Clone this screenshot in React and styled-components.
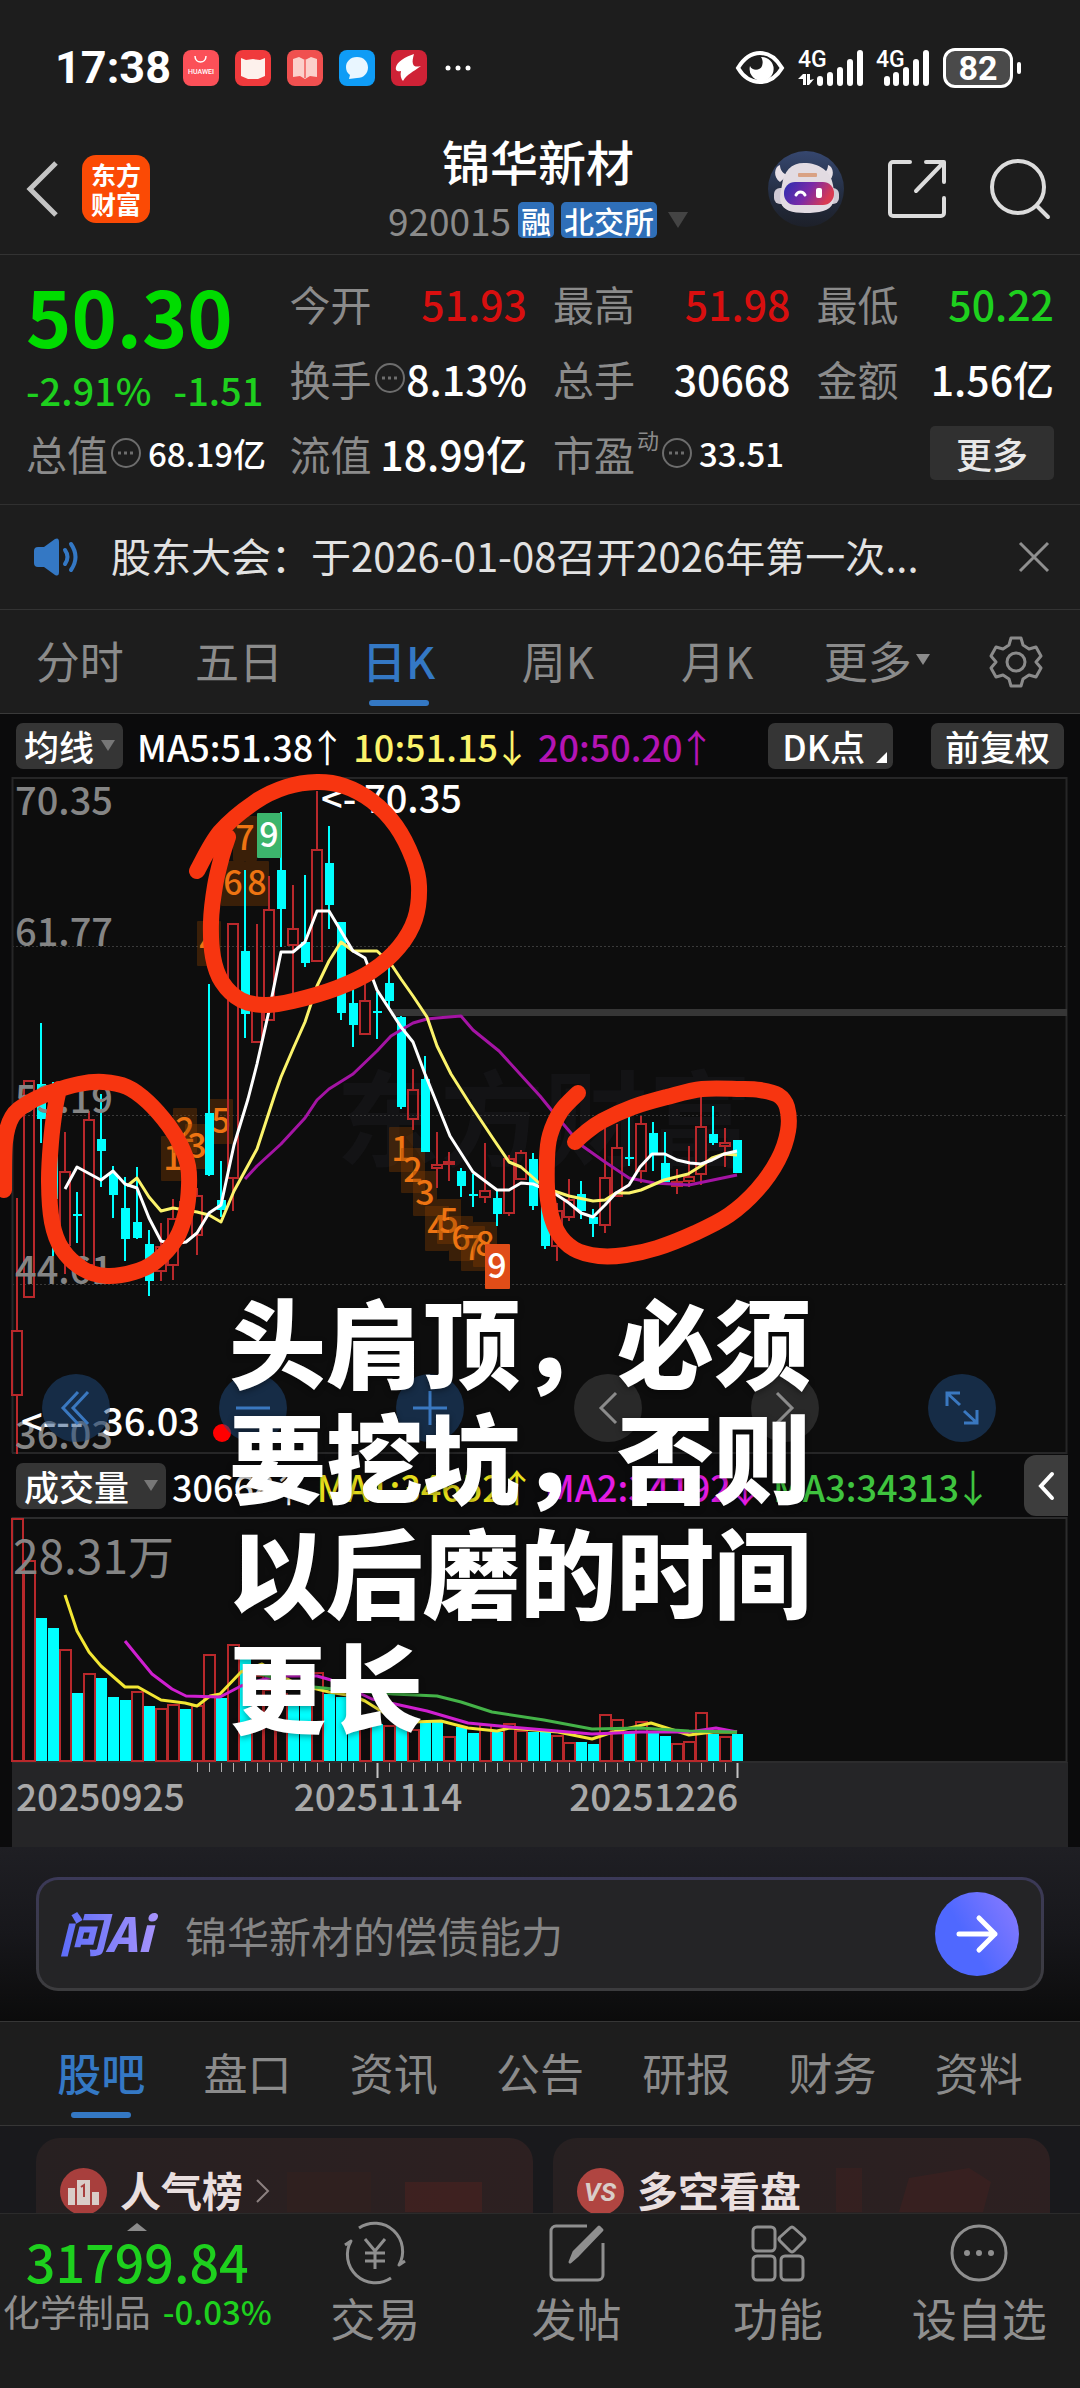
import React, { useState } from 'react';
import styled, { createGlobalStyle } from 'styled-components';

const FONT = '"Noto Sans CJK SC", "Noto Sans", sans-serif';
const CYAN = '#00ffff';
const RED = '#b8282b';
const STEP = 12;
const FIRST_X = 17;

const barX = (i) => FIRST_X + i * STEP;

// [high, body top, body bottom, low, up]
const candles = [
    [1199, 1331, 1397, 1455, 1],
    [1081, 1081, 1299, 1299, 1],
    [1024, 1085, 1120, 1144, 0],
    [1083, 1110, 1200, 1257, 0],
    [1133, 1172, 1247, 1275, 1],
    [1193, 1215, 1217, 1244, 0],
    [1112, 1120, 1267, 1267, 1],
    [1095, 1140, 1152, 1188, 0],
    [1167, 1175, 1196, 1219, 0],
    [1178, 1209, 1240, 1262, 0],
    [1168, 1223, 1239, 1240, 0],
    [1231, 1245, 1282, 1297, 0],
    [1224, 1247, 1273, 1282, 1],
    [1200, 1219, 1267, 1281, 1],
    [1198, 1202, 1215, 1222, 1],
    [1189, 1196, 1237, 1256, 1],
    [985, 1114, 1176, 1177, 0],
    [1162, 1201, 1211, 1218, 0],
    [924, 924, 1180, 1212, 1],
    [871, 952, 1015, 1039, 0],
    [925, 1000, 1044, 1044, 1],
    [877, 910, 1022, 1022, 1],
    [813, 871, 910, 948, 0],
    [886, 929, 947, 995, 1],
    [876, 943, 964, 968, 0],
    [792, 850, 963, 963, 1],
    [827, 864, 906, 930, 0],
    [923, 923, 1014, 1021, 0],
    [990, 1004, 1026, 1048, 0],
    [985, 1001, 1036, 1036, 1],
    [993, 1012, 1014, 1040, 0],
    [968, 984, 1002, 1008, 0],
    [1017, 1018, 1108, 1110, 0],
    [1070, 1090, 1121, 1131, 1],
    [1057, 1080, 1153, 1153, 0],
    [1133, 1165, 1170, 1189, 1],
    [1153, 1162, 1166, 1182, 1],
    [1169, 1172, 1187, 1198, 0],
    [1175, 1195, 1197, 1208, 0],
    [1144, 1191, 1199, 1204, 1],
    [1192, 1199, 1215, 1227, 0],
    [1156, 1159, 1215, 1217, 1],
    [1151, 1153, 1181, 1181, 1],
    [1154, 1160, 1207, 1211, 0],
    [1205, 1205, 1247, 1250, 0],
    [1204, 1211, 1248, 1262, 1],
    [1180, 1200, 1219, 1222, 1],
    [1182, 1195, 1212, 1220, 0],
    [1210, 1218, 1225, 1238, 0],
    [1129, 1178, 1227, 1234, 1],
    [1125, 1148, 1198, 1198, 1],
    [1117, 1158, 1160, 1167, 0],
    [1117, 1124, 1173, 1184, 1],
    [1123, 1134, 1156, 1172, 0],
    [1133, 1164, 1183, 1183, 0],
    [1170, 1182, 1188, 1195, 1],
    [1147, 1177, 1183, 1188, 1],
    [1098, 1127, 1176, 1186, 1],
    [1107, 1135, 1144, 1146, 0],
    [1129, 1143, 1148, 1168, 1],
    [1141, 1141, 1174, 1174, 0],
];

// [top, up]
const volumes = [
    [1519, 1], [1561, 1], [1619, 0], [1629, 0], [1650, 1], [1694, 0], [1674, 1], [1679, 0],
    [1698, 0], [1701, 0], [1692, 1], [1707, 0], [1709, 1], [1705, 1], [1710, 0], [1706, 1],
    [1655, 1], [1699, 0], [1645, 1], [1657, 0], [1676, 1], [1690, 1], [1694, 1], [1700, 0],
    [1702, 0], [1673, 1], [1695, 0], [1698, 0], [1722, 0], [1724, 1], [1725, 0], [1726, 1],
    [1727, 0], [1730, 1], [1723, 0], [1723, 0], [1737, 1], [1728, 0], [1734, 0], [1725, 1],
    [1733, 0], [1724, 1], [1731, 1], [1733, 0], [1733, 0], [1736, 1], [1743, 1], [1743, 0],
    [1745, 0], [1715, 1], [1720, 1], [1734, 0], [1722, 1], [1734, 0], [1737, 0], [1744, 1],
    [1742, 1], [1713, 1], [1735, 0], [1737, 1], [1735, 0],
];

const ma5 = '65,1190 77,1168 101,1181 113,1172 125,1185 137,1189 149,1219 161,1242 173,1245 186,1243 197,1234 209,1214 221,1206 234,1146 248,1100 257,1065 269,1012 281,953 293,953 305,943 317,912 329,912 341,932 353,952 365,959 377,991 401,1028 413,1043 425,1075 450,1137 473,1173 497,1191 509,1191 521,1184 533,1185 545,1190 557,1196 569,1204 581,1214 593,1218 605,1206 616,1194 629,1186 640,1168 652,1155 665,1155 677,1161 690,1164 701,1165 712,1161 724,1155 737,1152';
const ma10 = '127,1187 137,1179 149,1198 161,1212 173,1209 185,1211 197,1213 209,1216 221,1223 234,1192 257,1150 275,1095 281,1078 293,1050 305,1023 317,987 329,962 341,943 353,952 377,952 391,965 401,980 413,997 427,1018 437,1047 451,1075 470,1105 492,1138 509,1163 521,1168 538,1183 554,1192 569,1197 593,1202 605,1201 616,1194 629,1194 641,1191 664,1181 688,1175 701,1167 712,1159 724,1155 737,1156';
const ma20 = '245,1180 257,1167 281,1145 293,1132 305,1119 317,1101 329,1090 353,1075 377,1052 391,1037 401,1031 413,1024 427,1020 437,1019 461,1017 473,1031 499,1052 540,1097 553,1113 570,1133 581,1146 605,1163 629,1179 654,1184 689,1186 737,1176';
const vma1 = '65,1596 77,1632 89,1653 101,1667 125,1688 138,1688 161,1701 185,1704 197,1707 210,1697 220,1695 241,1673 262,1665 296,1685 329,1693 353,1697 365,1702 389,1717 413,1723 441,1722 468,1729 497,1732 510,1729 558,1733 592,1740 613,1733 651,1724 689,1736 713,1733 737,1733';
const vma2 = '125,1642 138,1658 152,1675 172,1690 186,1697 220,1698 241,1687 275,1677 317,1677 331,1681 372,1700 427,1712 468,1724 510,1728 592,1735 640,1733 689,1733 716,1729 737,1733';
const vma3 = '250,1672 303,1687 344,1691 393,1695 437,1697 461,1703 492,1713 544,1721 592,1730 640,1729 689,1732 737,1733';

// [label, box left, box top]
const counts = [
    ['1', 161, 1137], ['2', 173, 1109], ['3', 185, 1125], ['4', 197, 922], ['5', 209, 1100],
    ['6', 221, 862], ['7', 233, 817], ['8', 245, 862],
    ['1', 389, 1128], ['2', 401, 1149], ['3', 413, 1172], ['4', 425, 1207], ['5', 437, 1200],
    ['6', 449, 1217], ['7', 461, 1227], ['8', 473, 1223],
];

const sketches = [
    [[4, 1191], [5, 1143], [12, 1118], [28, 1104], [52, 1093], [79, 1085], [103, 1083], [127, 1088], [148, 1103], [169, 1127], [181, 1147], [188, 1167], [189, 1187], [186, 1213], [176, 1240], [155, 1263], [134, 1273], [107, 1277], [83, 1270], [62, 1250], [52, 1223], [49, 1183], [51, 1143], [55, 1110], [59, 1090]],
    [[197, 872], [220, 833], [255, 803], [286, 788], [317, 783], [344, 787], [372, 802], [396, 827], [413, 860], [419, 887], [415, 920], [399, 948], [372, 972], [337, 989], [293, 1002], [265, 1006], [241, 1001], [222, 983], [213, 958], [211, 923], [215, 887], [222, 857], [228, 838]],
    [[578, 1094], [561, 1112], [550, 1136], [547, 1160], [548, 1201], [557, 1232], [574, 1250], [599, 1257], [626, 1256], [657, 1249], [695, 1234], [729, 1216], [757, 1191], [778, 1161], [788, 1132], [787, 1108], [778, 1096], [760, 1091], [740, 1090], [702, 1090], [667, 1098], [633, 1108], [602, 1122], [585, 1134], [575, 1143]],
];

const smooth = (pts) =>
    pts.slice(0, -1).reduce((d, p, i) => {
        const a = pts[i - 1] || p;
        const b = pts[i + 1];
        const c = pts[i + 2] || b;
        return `${d} C${p[0] + (b[0] - a[0]) / 6} ${p[1] + (b[1] - a[1]) / 6} ${b[0] - (c[0] - p[0]) / 6} ${b[1] - (c[1] - p[1]) / 6} ${b[0]} ${b[1]}`;
    }, `M${pts[0][0]} ${pts[0][1]}`);

const priceLabels = [['70.35', 816], ['61.77', 947], ['53.19', 1114], ['44.61', 1285], ['36.03', 1450]];
const periods = ['分时', '五日', '日K', '周K', '月K', '更多'];
const sections = ['股吧', '盘口', '资讯', '公告', '研报', '财务', '资料'];

const KLineChart = () => (
    <Chart viewBox="0 778 1080 677" role="img" aria-label="日K">
        <rect x="12" y="778" width="1056" height="677" fill="#0d0d0d" />
        <g fontSize="104" fontWeight="700" fill="#131315">
            <text x="336" y="1160">东方财富</text>
        </g>
        <g stroke="#3a3a3a" strokeDasharray="2 2">
            <path d="M12 947.5H1067M12 1116.5H1067M12 1285.5H1067" />
        </g>
        <path d="M12.5 1454V779H1066.5V1454H12" fill="none" stroke="#262627" strokeWidth="2" />
        <rect x="391" y="1010" width="676" height="7" fill="#363636" />
        {counts.map(([label, x, y]) => (
            <g key={`${label}-${x}`}>
                <rect x={x} y={y} width="24" height="45" rx="1" fill="#8a4000" fillOpacity="0.36" />
                <text x={x + 12} y={y + 34} fontSize="34" textAnchor="middle" fill="#ee7412">{label}</text>
            </g>
        ))}
        {candles.map(([hi, top, bottom, lo, up], i) => {
            const x = barX(i);
            return up ? (
                <g key={i} stroke={RED} strokeWidth="2" fill="none">
                    <path d={`M${x} ${hi}V${top}M${x} ${bottom}V${lo}`} />
                    <rect x={x - 5} y={top + 1} width="10" height={Math.max(bottom - top - 2, 1)} />
                </g>
            ) : (
                <g key={i} fill={CYAN}>
                    <rect x={x - 1} y={hi} width="2" height={lo - hi} />
                    <rect x={x - 4} y={top} width="9" height={bottom - top} />
                </g>
            );
        })}
        <g fontSize="38" fill="#858585">
            {priceLabels.map(([label, y]) => (
                <text key={label} x="15" y={y}>{label}</text>
            ))}
        </g>
        <g fill="none" strokeWidth="3" strokeLinejoin="round">
            <polyline points={ma20} stroke="#a414a4" />
            <polyline points={ma10} stroke="#fbf36b" />
            <polyline points={ma5} stroke="#ffffff" />
        </g>
        <rect x="257" y="814" width="24" height="45" rx="1" fill="#3cb56c" />
        <rect x="485" y="1245" width="25" height="45" rx="1" fill="#e04d18" />
        <g fontSize="34" fill="#fff" textAnchor="middle">
            <text x="269" y="848">9</text>
            <text x="497" y="1279">9</text>
        </g>
        <g fontSize="38" fill="#fff">
            <text y="814">
                <tspan x="321">&lt;-</tspan>
                <tspan x="364">70.35</tspan>
            </text>
            <text y="1437">
                <tspan x="21">&lt;---</tspan>
                <tspan x="102">36.03</tspan>
            </text>
        </g>
        <circle cx="222" cy="1434" r="9" fill="#ff0000" />
    </Chart>
);

const VolumeChart = () => (
    <Chart viewBox="0 1518 1080 330" role="img" aria-label="成交量">
        <rect x="12" y="1518" width="1056" height="245" fill="#0d0d0d" />
        <rect x="12" y="1763" width="1056" height="85" fill="#252527" />
        <path d="M12.5 1763V1519H1066.5V1763H12" fill="none" stroke="#2c2c2d" strokeWidth="2" />
        {volumes.map(([top, up], i) =>
            up ? (
                <rect key={i} x={barX(i) - 5} y={top + 1} width="11" height={1761 - top} fill="none" stroke={RED} strokeWidth="2" />
            ) : (
                <rect key={i} x={barX(i) - 5} y={top} width="11" height={1762 - top} fill={CYAN} />
            )
        )}
        <text x="13" y="1575" fontSize="46" fontWeight="400" fill="#858585">28.31万</text>
        <g fill="none" strokeWidth="3" strokeLinejoin="round">
            <polyline points={vma1} stroke="#f2e634" />
            <polyline points={vma2} stroke="#cf1fd0" />
            <polyline points={vma3} stroke="#44b348" />
        </g>
        <g stroke="#b0b0b0" strokeWidth="1">
            {candles.map((c, i) => i > 14 && <path key={i} d={`M${barX(i) + 0.5} 1764V1773`} />)}
        </g>
        <path d="M377.5 1764V1779M737.5 1764V1779" stroke="#c4c4c4" strokeWidth="2" />
        <g fontSize="37" fill="#a9a9a9">
            <text x="16" y="1812">20250925</text>
            <text x="378" y="1812" textAnchor="middle">20251114</text>
            <text x="738" y="1812" textAnchor="end">20251226</text>
        </g>
    </Chart>
);

const Signal = ({ arrows }) => (
    <svg width={arrows ? 65 : 54} height="40" viewBox={arrows ? '0 0 65 40' : '0 0 54 40'} fill="#fff">
        <text x="0" y="19" fontSize="23" fontWeight="500" fontFamily="Roboto, sans-serif">4G</text>
        {arrows && <path d="M0 31l5-5h3v11H5V31zM9 26h3v6l4-1-5 6H9z" />}
        <path
            d={arrows ? 'M22 31v4M32 27v8M42 22v13M52 14v21M62 5v30' : 'M11 31v4M20 27v8M30 22v13M40 14v21M50 5v30'}
            stroke="#fff"
            strokeWidth="6"
            strokeLinecap="round"
        />
    </svg>
);

const Robot = () => (
    <svg width="76" height="76" viewBox="0 0 76 76">
        <defs>
            <linearGradient id="sky" x1="0" y1="0" x2="0" y2="1">
                <stop offset="0" stopColor="#36476f" />
                <stop offset="0.6" stopColor="#232c3f" />
                <stop offset="1" stopColor="#1d2029" />
            </linearGradient>
            <linearGradient id="visor" x1="0" y1="0" x2="1" y2="0.3">
                <stop offset="0" stopColor="#2a2fb0" />
                <stop offset="0.55" stopColor="#7a2aa8" />
                <stop offset="1" stopColor="#d83a52" />
            </linearGradient>
        </defs>
        <circle cx="38" cy="38" r="38" fill="url(#sky)" />
        <path d="M12 14c-6 2-7 12 0 17l8-7c-5-1-8-5-8-10zM60 14c6 2 7 12 0 17l-8-7c5-1 8-5 8-10z" fill="#e6dfe6" />
        <rect x="6" y="37" width="14" height="16" rx="6" fill="#cfc9d4" />
        <rect x="57" y="37" width="14" height="16" rx="6" fill="#cfc9d4" />
        <path d="M36 12c15 0 27 8 29 22 1 6 2 12 0 18-3 8-14 10-28 10-13 0-22-3-24-10-2-6 0-12 1-18 2-14 9-22 22-22z" fill="#e2dbe2" />
        <rect x="30" y="22" width="19" height="4" rx="1" fill="#d9a184" />
        <rect x="16" y="31" width="50" height="23" rx="11" fill="url(#visor)" />
        <path d="M28 44c2-4 7-4 9 0" fill="none" stroke="#fff" strokeWidth="3" strokeLinecap="round" />
        <rect x="48" y="37" width="6" height="10" rx="2" fill="#fff" />
    </svg>
);

const More = () => (
    <svg width="32" height="32" viewBox="0 0 32 32" fill="none" stroke="#6d6d6d" strokeWidth="2">
        <circle cx="16" cy="16" r="14" />
        <path d="M8 16h3M14 16h3M20 16h3" strokeWidth="3" />
    </svg>
);

const Gear = () => (
    <svg width="52" height="52" viewBox="0 0 52 52" fill="none" stroke="#8b8b8b" strokeWidth="3" strokeLinejoin="round">
        <path d="M21 2h10l2 7 6 4 7-2 5 9-5 6 5 6-5 9-7-2-6 4-2 7H21l-2-7-6-4-7 2-5-9 5-6-5-6 5-9 7 2 6-4z" />
        <circle cx="26" cy="26" r="9" />
    </svg>
);

const Stat = ({ label, value, color, hint, sup, small }) => (
    <StatCell>
        <StatLabel>
            {label}
            {sup && <Sup>{sup}</Sup>}
            {hint && <More />}
        </StatLabel>
        <StatValue $color={color} $small={small} $push={!small}>
            {value}
        </StatValue>
    </StatCell>
);

const App = () => {
    const [period, setPeriod] = useState('日K');
    const [section, setSection] = useState('股吧');

    return (
        <Page lang="zh-CN">
            <GlobalStyle />
            <StatusBar>
                <Time>17:38</Time>
                <AppIcons>
                    <svg width="36" height="36" viewBox="0 0 36 36">
                        <rect width="36" height="36" rx="8" fill="#fb5058" />
                        <path d="M12 6c0 8 11 8 11 0" fill="none" stroke="#fff" strokeWidth="1.5" />
                        <text x="18" y="24" fontSize="7" fill="#fff" textAnchor="middle" fontFamily="Roboto, sans-serif">HUAWEI</text>
                    </svg>
                    <svg width="36" height="36" viewBox="0 0 36 36">
                        <rect width="36" height="36" rx="8" fill="#f03a3c" />
                        <path d="M6 8l5 2 7-1 7 1 5-2v18l-7 3h-10l-7-3z" fill="#fdf1ec" />
                    </svg>
                    <svg width="36" height="36" viewBox="0 0 36 36">
                        <rect width="36" height="36" rx="8" fill="#f0504f" />
                        <path d="M6 9l6-2 6 3 6-3 6 2v18l-7-1-5 3-5-3-7 1z" fill="#fbd0cb" />
                        <path d="M18 10v18" stroke="#f37a78" strokeWidth="2" />
                    </svg>
                    <svg width="36" height="36" viewBox="0 0 36 36">
                        <rect width="36" height="36" rx="8" fill="#0f9cf6" />
                        <path d="M18 7c7 0 11 5 11 10.500S25 28 18 28l-8 1 1-4c-3-2-4-5-4-8C7 12 11 7 18 7z" fill="#e9f6ff" />
                    </svg>
                    <svg width="36" height="36" viewBox="0 0 36 36">
                        <rect width="36" height="36" rx="8" fill="#cf2236" />
                        <path d="M23 4c-9 3-17 8-18 13-1 4 2 5 5 4-1 4 0 8 2 10 4-7 10-9 18-15-4 1-7 1-8-2-1-3 0-6 1-10z" fill="#fff" />
                    </svg>
                    <svg width="30" height="36" viewBox="0 0 30 36" fill="#fff">
                        <circle cx="5" cy="18" r="2.5" />
                        <circle cx="15" cy="18" r="2.5" />
                        <circle cx="25" cy="18" r="2.5" />
                    </svg>
                </AppIcons>
                <StatusRight>
                    <svg width="50" height="36" viewBox="0 0 50 36" fill="none">
                        <path d="M3 18C9 8 17 3 25 3s16 5 22 15c-6 10-14 14-22 14S9 28 3 18z" stroke="#fff" strokeWidth="4" />
                        <path d="M26 7a12 12 0 1 1-11 9c2 5 10 5 12 0 1-3 1-6-1-9z" fill="#fff" />
                    </svg>
                    <Signal arrows />
                    <Signal />
                    <Battery>82</Battery>
                </StatusRight>
            </StatusBar>

            <Header>
                <HeaderSide>
                    <IconButton aria-label="返回">
                        <svg width="32" height="56" viewBox="0 0 32 56" fill="none" stroke="#c4c4c4" strokeWidth="5">
                            <path d="M30 2L4 28l26 26" />
                        </svg>
                    </IconButton>
                    <Brand>
                        <span>东方</span>
                        <span>财富</span>
                    </Brand>
                </HeaderSide>
                <TitleBlock>
                    <StockName>锦华新材</StockName>
                    <StockMeta>
                        <span>920015</span>
                        <Badge>融</Badge>
                        <Badge>北交所</Badge>
                        <Caret $size={20} $color="#444" />
                    </StockMeta>
                </TitleBlock>
                <HeaderSide $end>
                    <IconButton aria-label="智能助手">
                        <Robot />
                    </IconButton>
                    <IconButton aria-label="分享">
                        <svg width="58" height="58" viewBox="0 0 58 58" fill="none" stroke="#dcdcdc" strokeWidth="4" strokeLinecap="round" strokeLinejoin="round">
                            <path d="M22 2H5a3 3 0 0 0-3 3v48a3 3 0 0 0 3 3h48a3 3 0 0 0 3-3V38M38 2h18v20M55 3L28 31" />
                        </svg>
                    </IconButton>
                    <IconButton aria-label="搜索">
                        <svg width="60" height="60" viewBox="0 0 60 60" fill="none" stroke="#dcdcdc" strokeWidth="4" strokeLinecap="round">
                            <circle cx="28" cy="28" r="26" />
                            <path d="M47 47l11 11" />
                        </svg>
                    </IconButton>
                </HeaderSide>
            </Header>

            <Quote>
                <PriceColumn>
                    <Price>50.30</Price>
                    <Change>
                        <span>-2.91%</span>
                        <span>-1.51</span>
                    </Change>
                    <Stat label="总值" hint value="68.19亿" small />
                </PriceColumn>
                <StatGrid>
                    <Stat label="今开" value="51.93" color="#d80f0f" />
                    <Stat label="最高" value="51.98" color="#d80f0f" />
                    <Stat label="最低" value="50.22" color="#1ed01e" />
                    <Stat label="换手" hint value="8.13%" />
                    <Stat label="总手" value="30668" />
                    <Stat label="金额" value="1.56亿" />
                    <Stat label="流值" value="18.99亿" />
                    <Stat label="市盈" sup="动" hint value="33.51" small />
                    <StatCell>
                        <MoreButton>更多</MoreButton>
                    </StatCell>
                </StatGrid>
            </Quote>

            <Notice>
                <svg width="46" height="38" viewBox="0 0 46 38" fill="#3478c4">
                    <path d="M0 13q0-4 4-4h6L21 1q4-2 4 3v30q0 5-4 3L10 29H4q-4 0-4-4z" />
                    <path d="M31 12q5 7 0 14M37 6q9 13 0 26" fill="none" stroke="#3478c4" strokeWidth="4" strokeLinecap="round" />
                </svg>
                <NoticeText>股东大会：于2026-01-08召开2026年第一次...</NoticeText>
                <IconButton aria-label="关闭">
                    <svg width="32" height="32" viewBox="0 0 32 32" stroke="#8f8f8f" strokeWidth="3">
                        <path d="M2 2l28 28M30 2L2 30" />
                    </svg>
                </IconButton>
            </Notice>

            <Periods>
                {periods.map((name) => (
                    <Tab key={name} $active={name === period} onClick={() => setPeriod(name)}>
                        {name}
                        {name === '更多' && <Caret $size={14} $color="#8b8b8b" />}
                    </Tab>
                ))}
                <GearButton aria-label="设置">
                    <Gear />
                </GearButton>
            </Periods>

            <ChartArea>
                <Indicators>
                    <Chip>
                        均线
                        <Caret $size={14} $color="#777" />
                    </Chip>
                    <Values>
                        <Legend $color="#fff">MA5:51.38<Arrow>↑</Arrow></Legend>
                        <Legend $color="#fbf36b">10:51.15<Arrow>↓</Arrow></Legend>
                        <Legend $color="#b414b4">20:50.20<Arrow>↑</Arrow></Legend>
                    </Values>
                    <ChipGroup>
                        <CornerChip>
                            DK点
                            <Corner />
                        </CornerChip>
                        <WideChip>前复权</WideChip>
                    </ChipGroup>
                </Indicators>

                <ChartPanel>
                    <KLineChart />
                    <Controls>
                        <RoundButton aria-label="历史">
                            <svg width="34" height="40" viewBox="0 0 34 40">
                                <path d="M19 4L4 20l15 16M29 4L14 20l15 16" />
                            </svg>
                        </RoundButton>
                        <RoundButton aria-label="缩小">
                            <svg width="34" height="34" viewBox="0 0 34 34">
                                <path d="M0 17h34" />
                            </svg>
                        </RoundButton>
                        <RoundButton aria-label="放大">
                            <svg width="34" height="34" viewBox="0 0 34 34">
                                <path d="M0 17h34M17 0v34" />
                            </svg>
                        </RoundButton>
                        <RoundButton $plain aria-label="左移">
                            <svg width="20" height="32" viewBox="0 0 20 32">
                                <path d="M18 1L3 16l15 15" />
                            </svg>
                        </RoundButton>
                        <RoundButton $plain aria-label="右移">
                            <svg width="20" height="32" viewBox="0 0 20 32">
                                <path d="M2 1l15 15L2 31" />
                            </svg>
                        </RoundButton>
                        <RoundButton aria-label="全屏">
                            <svg width="36" height="36" viewBox="0 0 36 36">
                                <path d="M3 16V3h13M3 3l13 12M33 20v13H20M33 33L20 21" />
                            </svg>
                        </RoundButton>
                    </Controls>
                </ChartPanel>

                <VolumeBar>
                    <Chip $gap={11}>
                        成交量
                        <Caret $size={14} $color="#777" />
                    </Chip>
                    <VolumeValues>
                        <Legend $color="#fff">30668<Arrow>↑</Arrow></Legend>
                        <Legend $color="#e8e01c">MA1:34652<Arrow>↑</Arrow></Legend>
                        <Legend $color="#e41ce4">MA2:34192<Arrow>↓</Arrow></Legend>
                        <Legend $color="#3fc43f">MA3:34313<Arrow>↓</Arrow></Legend>
                    </VolumeValues>
                    <SideButton aria-label="展开">
                        <svg width="16" height="28" viewBox="0 0 16 28" fill="none" stroke="#fff" strokeWidth="4" strokeLinecap="round">
                            <path d="M14 2L3 14l11 12" />
                        </svg>
                    </SideButton>
                </VolumeBar>
                <VolumeChart />

                <Sketch viewBox="0 715 1080 1133" fill="none" stroke="#f73510" strokeWidth="16" strokeLinecap="round" strokeLinejoin="round">
                    {sketches.map((pts) => (
                        <path key={pts[0][0]} d={smooth(pts)} />
                    ))}
                </Sketch>
                <Caption>
                    头肩顶，必须
                    <br />
                    要挖坑，否则
                    <br />
                    以后磨的时间
                    <br />
                    更长
                </Caption>
            </ChartArea>

            <AskSection>
                <AskBox>
                    <AskLabel htmlFor="ask">问Ai</AskLabel>
                    <AskInput id="ask" placeholder="锦华新材的偿债能力" />
                    <SendButton aria-label="发送">
                        <svg width="42" height="38" viewBox="0 0 42 38" fill="none" stroke="#fff" strokeWidth="5" strokeLinecap="round" strokeLinejoin="round">
                            <path d="M3 19h36M23 3l16 16-16 16" />
                        </svg>
                    </SendButton>
                </AskBox>
            </AskSection>

            <Sections>
                {sections.map((name) => (
                    <Tab key={name} $active={name === section} onClick={() => setSection(name)}>
                        {name}
                    </Tab>
                ))}
            </Sections>

            <Cards>
                <Card>
                    <svg width="47" height="47" viewBox="0 0 47 47">
                        <circle cx="23.5" cy="23.5" r="23.5" fill="#a83f3d" />
                        <path d="M8 20h7v17H8zM17 12h13v25H17zM32 24h7v13h-7z" fill="#d9cdc8" />
                        <path d="M21 19l3-2v12" fill="none" stroke="#a83f3d" strokeWidth="2" />
                    </svg>
                    <CardTitle>人气榜</CardTitle>
                    <svg width="14" height="24" viewBox="0 0 14 24" fill="none" stroke="#8c8080" strokeWidth="2">
                        <path d="M1 1l11 11L1 23" />
                    </svg>
                    <CardArt viewBox="0 0 210 74">
                        <path d="M0 34h84v40H0z" fill="#33201f" />
                        <path d="M118 44h77v30h-77z" fill="#4a2220" />
                    </CardArt>
                </Card>
                <Card>
                    <svg width="47" height="47" viewBox="0 0 47 47">
                        <circle cx="23.5" cy="23.5" r="23.5" fill="#b04541" />
                        <text x="23" y="33" fontSize="26" fontWeight="700" fontStyle="italic" fill="#d9cdc8" textAnchor="middle" fontFamily="Roboto, sans-serif">VS</text>
                    </svg>
                    <CardTitle>多空看盘</CardTitle>
                    <CardArt viewBox="0 0 210 74">
                        <path d="M32 30h26v44H32z" fill="#3c2020" />
                        <path d="M95 74l10-34 60-10 22 14-8 30z" fill="#3f2120" />
                    </CardArt>
                </Card>
            </Cards>

            <BottomBar>
                <IndexCell>
                    <Caret $size={20} $color="#8b8b8b" $up />
                    <IndexValue>31799.84</IndexValue>
                    <IndexMeta>
                        <span>化学制品</span>
                        <IndexChange>-0.03%</IndexChange>
                    </IndexMeta>
                </IndexCell>
                <NavButton>
                    <svg width="64" height="60" viewBox="0 0 64 60">
                        <path d="M16 5a28 28 0 0 1 40 37l6-4M48 55A28 28 0 0 1 8 18l-6 4" />
                        <path d="M22 16l10 12 10-12M22 30h20M22 38h20M32 28v18" />
                    </svg>
                    交易
                </NavButton>
                <NavButton>
                    <svg width="60" height="60" viewBox="0 0 60 60">
                        <path d="M40 3H9a5 5 0 0 0-5 5v44a5 5 0 0 0 5 5h42a5 5 0 0 0 5-5V20" />
                        <path d="M23 39l4-10L52 4l3 3-24 25z" fill="#8f8f8f" />
                    </svg>
                    发帖
                </NavButton>
                <NavButton>
                    <svg width="60" height="60" viewBox="0 0 60 60">
                        <rect x="5" y="4" width="22" height="24" rx="4" />
                        <rect x="5" y="33" width="22" height="24" rx="4" />
                        <rect x="33" y="33" width="22" height="24" rx="4" />
                        <path d="M42 5q2-2 4 0l10 9q2 2 0 4l-10 10q-2 2-4 0l-10-10q-2-2 0-4z" />
                    </svg>
                    功能
                </NavButton>
                <NavButton>
                    <svg width="60" height="60" viewBox="0 0 60 60">
                        <circle cx="30" cy="30" r="27" />
                        <g fill="#8f8f8f" stroke="none">
                            <circle cx="18" cy="30" r="3" />
                            <circle cx="30" cy="30" r="3" />
                            <circle cx="42" cy="30" r="3" />
                        </g>
                    </svg>
                    设自选
                </NavButton>
            </BottomBar>
        </Page>
    );
};

const GlobalStyle = createGlobalStyle`
    * {
        box-sizing: border-box;
    }
    body {
        margin: 0;
        background: #1d1d1d;
        font-family: ${FONT};
        font-weight: 500;
    }
    button, input {
        margin: 0;
        padding: 0;
        border: 0;
        background: none;
        color: inherit;
        font-family: inherit;
        font-weight: inherit;
    }
    svg {
        display: block;
        flex-shrink: 0;
        overflow: visible;
    }
`;

const Page = styled.main`
    min-height: 100vh;
    overflow: hidden;
    background: #1d1d1d;
    color: #fff;
    display: flex;
    flex-direction: column;
`;

const StatusBar = styled.div`
    display: flex;
    align-items: center;
    padding: 46px 67px 0 55px;
    height: 90px;
`;

const Time = styled.span`
    font-size: 45px;
    font-weight: 700;
    line-height: 44px;
    font-family: Roboto, sans-serif;
`;

const AppIcons = styled.div`
    display: flex;
    gap: 16px;
    margin-left: 12px;
`;

const StatusRight = styled.div`
    display: flex;
    align-items: center;
    gap: 13px;
    margin-left: auto;
`;

const Battery = styled.div`
    position: relative;
    width: 70px;
    height: 40px;
    border: 3px solid #fff;
    border-radius: 12px;
    background: #4a4a4a;
    font: 700 34px/34px Roboto, sans-serif;
    text-align: center;

    &::after {
        content: '';
        position: absolute;
        right: -11px;
        top: 11px;
        width: 4px;
        height: 12px;
        border-radius: 2px;
        background: #fff;
    }
`;

const Header = styled.header`
    display: grid;
    grid-template-columns: 1fr auto 1fr;
    align-items: center;
    padding: 40px 30px 6px 26px;
    border-bottom: 1px solid #333;
`;

const HeaderSide = styled.div`
    display: flex;
    align-items: center;
    gap: ${(props) => (props.$end ? '44px' : '24px')};
    justify-content: ${(props) => (props.$end ? 'flex-end' : 'flex-start')};
`;

const IconButton = styled.button`
    display: flex;
    align-items: center;
    justify-content: center;
`;

const Brand = styled.div`
    display: flex;
    flex-direction: column;
    align-items: center;
    justify-content: center;
    width: 68px;
    height: 68px;
    border-radius: 14px;
    background: #fb4a05;
    font-size: 25px;
    font-weight: 700;
    line-height: 29px;
`;

const TitleBlock = styled.div`
    display: flex;
    flex-direction: column;
    align-items: center;
    gap: 8px;
    padding-bottom: 6px;
`;

const StockName = styled.h1`
    margin: 0;
    font-size: 48px;
    font-weight: 500;
    line-height: 60px;
`;

const StockMeta = styled.div`
    display: flex;
    align-items: center;
    gap: 7px;
    color: #8b8b8b;
    font-size: 37px;
    font-weight: 400;
    line-height: 44px;
`;

const Badge = styled.span`
    padding: 0 3px;
    border-radius: 5px;
    background: #2f6fb8;
    color: #fff;
    font-size: 30px;
    font-weight: 500;
    line-height: 36px;
`;

const Caret = styled.i`
    width: 0;
    height: 0;
    margin-left: 4px;
    border: ${(props) => props.$size / 2}px solid transparent;
    border-top: ${(props) => (props.$up ? 0 : props.$size * 0.8)}px solid ${(props) => props.$color};
    border-bottom-width: 0;
    ${(props) =>
        props.$up &&
        `
        margin: 0;
        border-top: 0;
        border-bottom: 8px solid ${props.$color};
    `}
`;

const Quote = styled.section`
    display: grid;
    grid-template-columns: repeat(4, 1fr);
    gap: 26px;
    padding: 10px 26px 14px;
    border-bottom: 1px solid #303030;
`;

const PriceColumn = styled.div`
    display: flex;
    flex-direction: column;
    min-width: 0;
`;

const Price = styled.div`
    color: #00dc00;
    font-size: 77px;
    font-weight: 700;
    line-height: 100px;
`;

const Change = styled.div`
    display: flex;
    gap: 22px;
    color: #1ed01e;
    font-size: 38px;
    line-height: 50px;
`;

const StatGrid = styled.div`
    grid-column: 2 / -1;
    display: grid;
    grid-template-columns: repeat(3, 1fr);
    column-gap: 26px;
`;

const StatCell = styled.div`
    display: flex;
    align-items: center;
    height: 75px;
    white-space: nowrap;
`;

const StatLabel = styled.span`
    display: flex;
    align-items: center;
    gap: 2px;
    color: #8b8b8b;
    font-size: 41px;
    font-weight: 400;
    line-height: 50px;
`;

const StatValue = styled.span`
    margin-left: ${(props) => (props.$push ? 'auto' : '6px')};
    color: ${(props) => props.$color || '#fff'};
    font-size: ${(props) => (props.$small ? '33px' : '41px')};
    line-height: 50px;
`;

const Sup = styled.sup`
    align-self: flex-start;
    font-size: 22px;
    line-height: 22px;
`;

const MoreButton = styled.button`
    width: 124px;
    margin-left: auto;
    border-radius: 5px;
    background: #303030;
    color: #e8e8e8;
    font-size: 36px;
    line-height: 54px;
`;

const Notice = styled.section`
    display: flex;
    align-items: center;
    padding: 0 30px 0 34px;
    height: 105px;
    border-bottom: 1px solid #333;
`;

const NoticeText = styled.p`
    flex: 1;
    margin: 0 0 0 31px;
    padding-bottom: 4px;
    color: #e2e2e2;
    font-size: 40px;
    font-weight: 400;
    line-height: 56px;
    white-space: nowrap;
`;

const Periods = styled.nav`
    display: flex;
    height: 104px;
    padding-right: 4px;
    border-bottom: 1px solid #3a3a3a;
`;

const Tab = styled.button`
    position: relative;
    display: flex;
    flex: 4;
    align-items: center;
    justify-content: center;
    padding-bottom: 4px;
    color: ${(props) => (props.$active ? '#3478c4' : '#8b8b8b')};
    font-size: 44px;
    font-weight: ${(props) => (props.$active ? 500 : 400)};
    line-height: 60px;

    &::after {
        content: '';
        position: absolute;
        bottom: 7px;
        width: 60px;
        height: 6px;
        border-radius: 3px;
        background: ${(props) => (props.$active ? '#3478c4' : 'transparent')};
    }
`;

const GearButton = styled(IconButton)`
    flex: 3;
`;

const ChartArea = styled.section`
    position: relative;
    background: #0b0b0c;
`;

const Indicators = styled.div`
    display: flex;
    align-items: center;
    gap: 14px;
    height: 63px;
    padding: 0 16px;
`;

const Chip = styled.button`
    position: relative;
    display: flex;
    align-items: center;
    gap: ${(props) => props.$gap || 3}px;
    padding: 0 8px;
    border-radius: 7px;
    background: #353535;
    font-size: 35px;
    line-height: 46px;
    white-space: nowrap;
`;

const WideChip = styled(Chip)`
    padding: 0 14px;
`;

const CornerChip = styled(Chip)`
    padding: 0 28px 0 14px;
`;

const Corner = styled.i`
    position: absolute;
    right: 6px;
    bottom: 6px;
    border-left: 11px solid transparent;
    border-bottom: 11px solid #fff;
`;

const ChipGroup = styled.div`
    display: flex;
    gap: 38px;
    margin-left: auto;
`;

const Values = styled.div`
    display: flex;
    gap: 12px;
`;

const VolumeValues = styled(Values)`
    gap: 14px;
`;

const Legend = styled.span`
    display: flex;
    align-items: center;
    color: ${(props) => props.$color};
    font-size: 36px;
    line-height: 46px;
    white-space: nowrap;
`;

const Arrow = styled.span`
    display: flex;
    justify-content: center;
    width: 28px;
    font-size: 38px;
    font-weight: 400;
`;

const Chart = styled.svg`
    width: 100%;
    height: auto;
    font-family: ${FONT};
`;

const ChartPanel = styled.div`
    position: relative;
`;

const Controls = styled.div`
    position: absolute;
    left: 0;
    right: 0;
    bottom: 12px;
    display: flex;
    justify-content: space-between;
    padding: 0 84px 0 42px;
`;

const RoundButton = styled.button`
    display: flex;
    align-items: center;
    justify-content: center;
    width: 68px;
    height: 68px;
    border-radius: 50%;
    background: ${(props) => (props.$plain ? 'rgba(70, 70, 70, 0.5)' : 'rgba(32, 76, 128, 0.5)')};

    svg {
        fill: none;
        stroke: ${(props) => (props.$plain ? '#8b8b8b' : '#3a78c0')};
        stroke-width: 3;
    }
`;

const VolumeBar = styled.div`
    display: flex;
    align-items: center;
    gap: 6px;
    height: 63px;
    padding: 0 12px 0 16px;
`;

const SideButton = styled(IconButton)`
    width: 44px;
    height: 61px;
    margin-left: auto;
    border-radius: 12px 0 0 12px;
    background: #3d3d3d;
`;

const Sketch = styled.svg`
    position: absolute;
    top: 0;
    left: 0;
    width: 100%;
    height: auto;
    pointer-events: none;
`;

const Caption = styled.p`
    position: absolute;
    top: 567px;
    left: 229px;
    margin: 0;
    color: #fff;
    font-size: 97px;
    font-weight: 900;
    line-height: 115px;
    text-shadow: 0 2px 6px rgba(0, 0, 0, 0.4);
    white-space: nowrap;
    pointer-events: none;
`;

const AskSection = styled.section`
    padding: 30px 36px;
    border-bottom: 1px solid #363636;
    background: linear-gradient(#1f1f24, #17171b 50%, #0b0b0b);
`;

const AskBox = styled.div`
    display: flex;
    align-items: center;
    height: 114px;
    padding: 0 22px 0 20px;
    border: 3px solid transparent;
    border-radius: 22px;
    background:
        linear-gradient(#242426, #242426) padding-box,
        linear-gradient(#3b3958, #3c3c3e) border-box;
`;

const AskLabel = styled.label`
    padding: 0 6px 4px 0;
    background: linear-gradient(90deg, #5b6cf8, #a793fb);
    background-clip: text;
    color: transparent;
    font-size: 47px;
    font-style: italic;
    font-weight: 900;
    line-height: 60px;
`;

const AskInput = styled.input`
    flex: 1;
    min-width: 0;
    margin-left: 27px;
    font-size: 42px;
    font-weight: 400;
    outline: none;

    &::placeholder {
        color: #858585;
        opacity: 1;
    }
`;

const SendButton = styled(IconButton)`
    width: 84px;
    height: 84px;
    border-radius: 50%;
    background: linear-gradient(60deg, #4f68ff 40%, #8c7cff);
`;

const Sections = styled.nav`
    display: flex;
    height: 104px;
    padding: 0 28px;
    border-bottom: 1px solid #363636;
`;

const Cards = styled.section`
    display: grid;
    grid-template-columns: 1fr 1fr;
    gap: 20px;
    height: 87px;
    padding: 12px 30px 0 36px;
    overflow: hidden;
    background: #19191c;
`;

const Card = styled.article`
    position: relative;
    display: flex;
    align-items: center;
    gap: 13px;
    height: 106px;
    padding: 0 24px;
    border-radius: 24px;
    background: linear-gradient(90deg, #272021, #2d2021);
`;

const CardTitle = styled.h2`
    margin: 0;
    padding-bottom: 4px;
    color: #e9dfdf;
    font-size: 41px;
    font-weight: 700;
    line-height: 56px;
`;

const CardArt = styled.svg`
    position: absolute;
    top: 0;
    right: 36px;
    width: 210px;
    opacity: 0.6;
`;

const BottomBar = styled.footer`
    position: relative;
    display: flex;
    flex: 1;
    align-items: flex-start;
    border-top: 1px solid #2b2b2b;
    background: #1d1d1d;
`;

const IndexCell = styled.div`
    display: flex;
    flex: 274;
    flex-direction: column;
    align-items: center;
    padding-top: 9px;
    white-space: nowrap;
`;

const IndexValue = styled.div`
    color: #1ed01e;
    font-size: 52px;
    line-height: 60px;
`;

const IndexMeta = styled.div`
    display: flex;
    align-items: center;
    gap: 12px;
    color: #8f8f8f;
    font-size: 37px;
    font-weight: 400;
    line-height: 40px;
`;

const IndexChange = styled.span`
    color: #1ed01e;
    font-size: 33px;
    font-weight: 500;
`;

const NavButton = styled.button`
    display: flex;
    flex: 201;
    flex-direction: column;
    align-items: center;
    gap: 5px;
    padding: 9px 0 32px;
    color: #8f8f8f;
    font-size: 45px;
    font-weight: 400;
    line-height: 60px;
    white-space: nowrap;

    svg {
        fill: none;
        stroke: #8f8f8f;
        stroke-width: 3;
        stroke-linejoin: round;
    }
`;

export default App;
